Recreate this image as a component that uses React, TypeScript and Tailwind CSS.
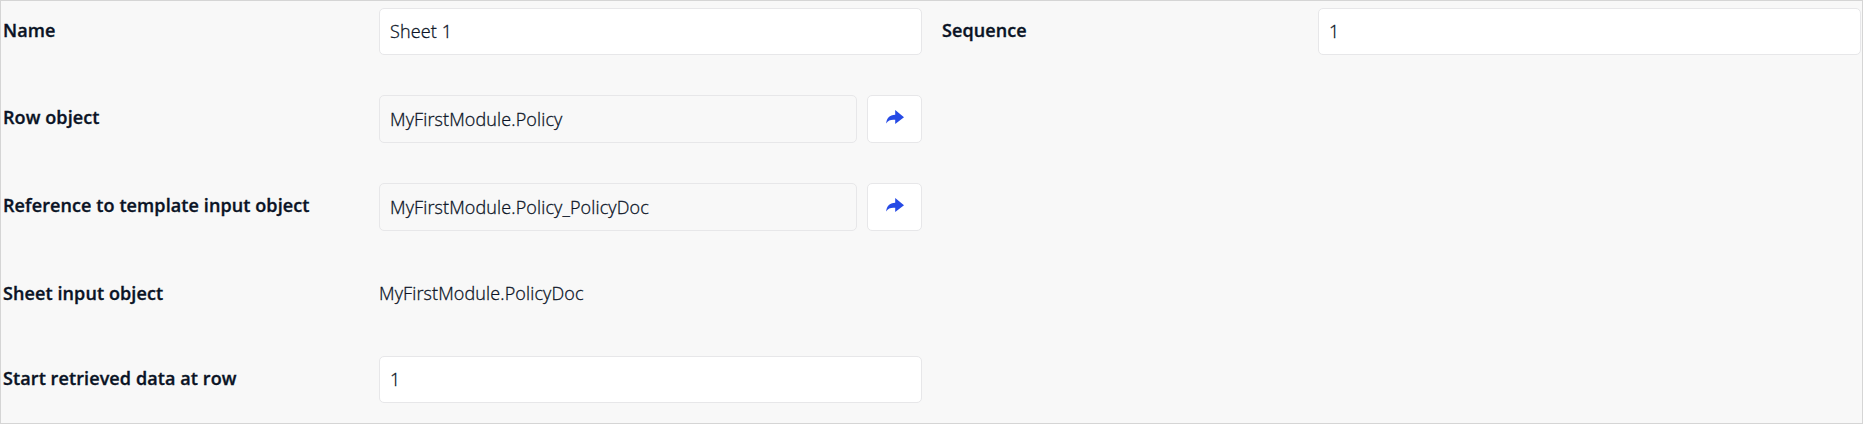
import React from 'react';

const value = 'font-light tracking-[0.12px] [-webkit-text-stroke:0.3px_#0a1325]';
const input = `flex items-center rounded-[5px] border border-[#e7e7e9] pl-[10px] ${value}`;
const label = 'w-[376px] shrink-0 pt-[9px] font-semibold tracking-[0.1px] [-webkit-text-stroke:0.35px_#0a1325]';

function Share() {
  return (
    <button className="ml-[10px] flex h-[48px] w-[55px] items-center justify-center rounded-[5px] border border-[#e7e7e9] bg-white pb-[4px]">
      <svg width="18" height="14" viewBox="0 0 18 14" fill="#264ae5">
        <path d="M9.2 0 L18 7.2 L9.2 14 V9.8 C5.5 9.3 2.2 10 0.2 13.5 C0.5 8.3 3.5 4.9 9.2 4.7 Z" />
      </svg>
    </button>
  );
}

export default function App() {
  return (
    <div className="flex h-[424px] w-full border border-[#d5d5d5] bg-[#f8f8f8] pl-[2px] pt-[7px] font-['Open_Sans',sans-serif] text-[18px] leading-[26px] text-[#0a1325]">
      <div className="w-[939px] shrink-0">
        <div className="flex h-[87px]"><div className={label}>Name</div><div className={input + ' h-[47px] w-[543px] bg-white pb-px'}>Sheet 1</div></div>
        <div className="flex h-[88px]"><div className={label}>Row object</div><div className={input + ' h-[48px] w-[478px]'}>MyFirstModule.Policy</div><Share /></div>
        <div className="flex h-[88px]"><div className={label}>Reference to template input object</div><div className={input + ' h-[48px] w-[478px]'}>MyFirstModule.Policy_PolicyDoc</div><Share /></div>
        <div className="flex h-[85px]"><div className={label}>Sheet input object</div><div className={value + ' pt-[9px]'}>MyFirstModule.PolicyDoc</div></div>
        <div className="flex"><div className={label}>Start retrieved data at row</div><div className={input + ' h-[47px] w-[543px] bg-white pb-px'}>1</div></div>
      </div>
      <div className="flex flex-1"><div className={label}>Sequence</div><div className={input + ' h-[47px] w-[543px] bg-white pb-px'}>1</div></div>
    </div>
  );
}
